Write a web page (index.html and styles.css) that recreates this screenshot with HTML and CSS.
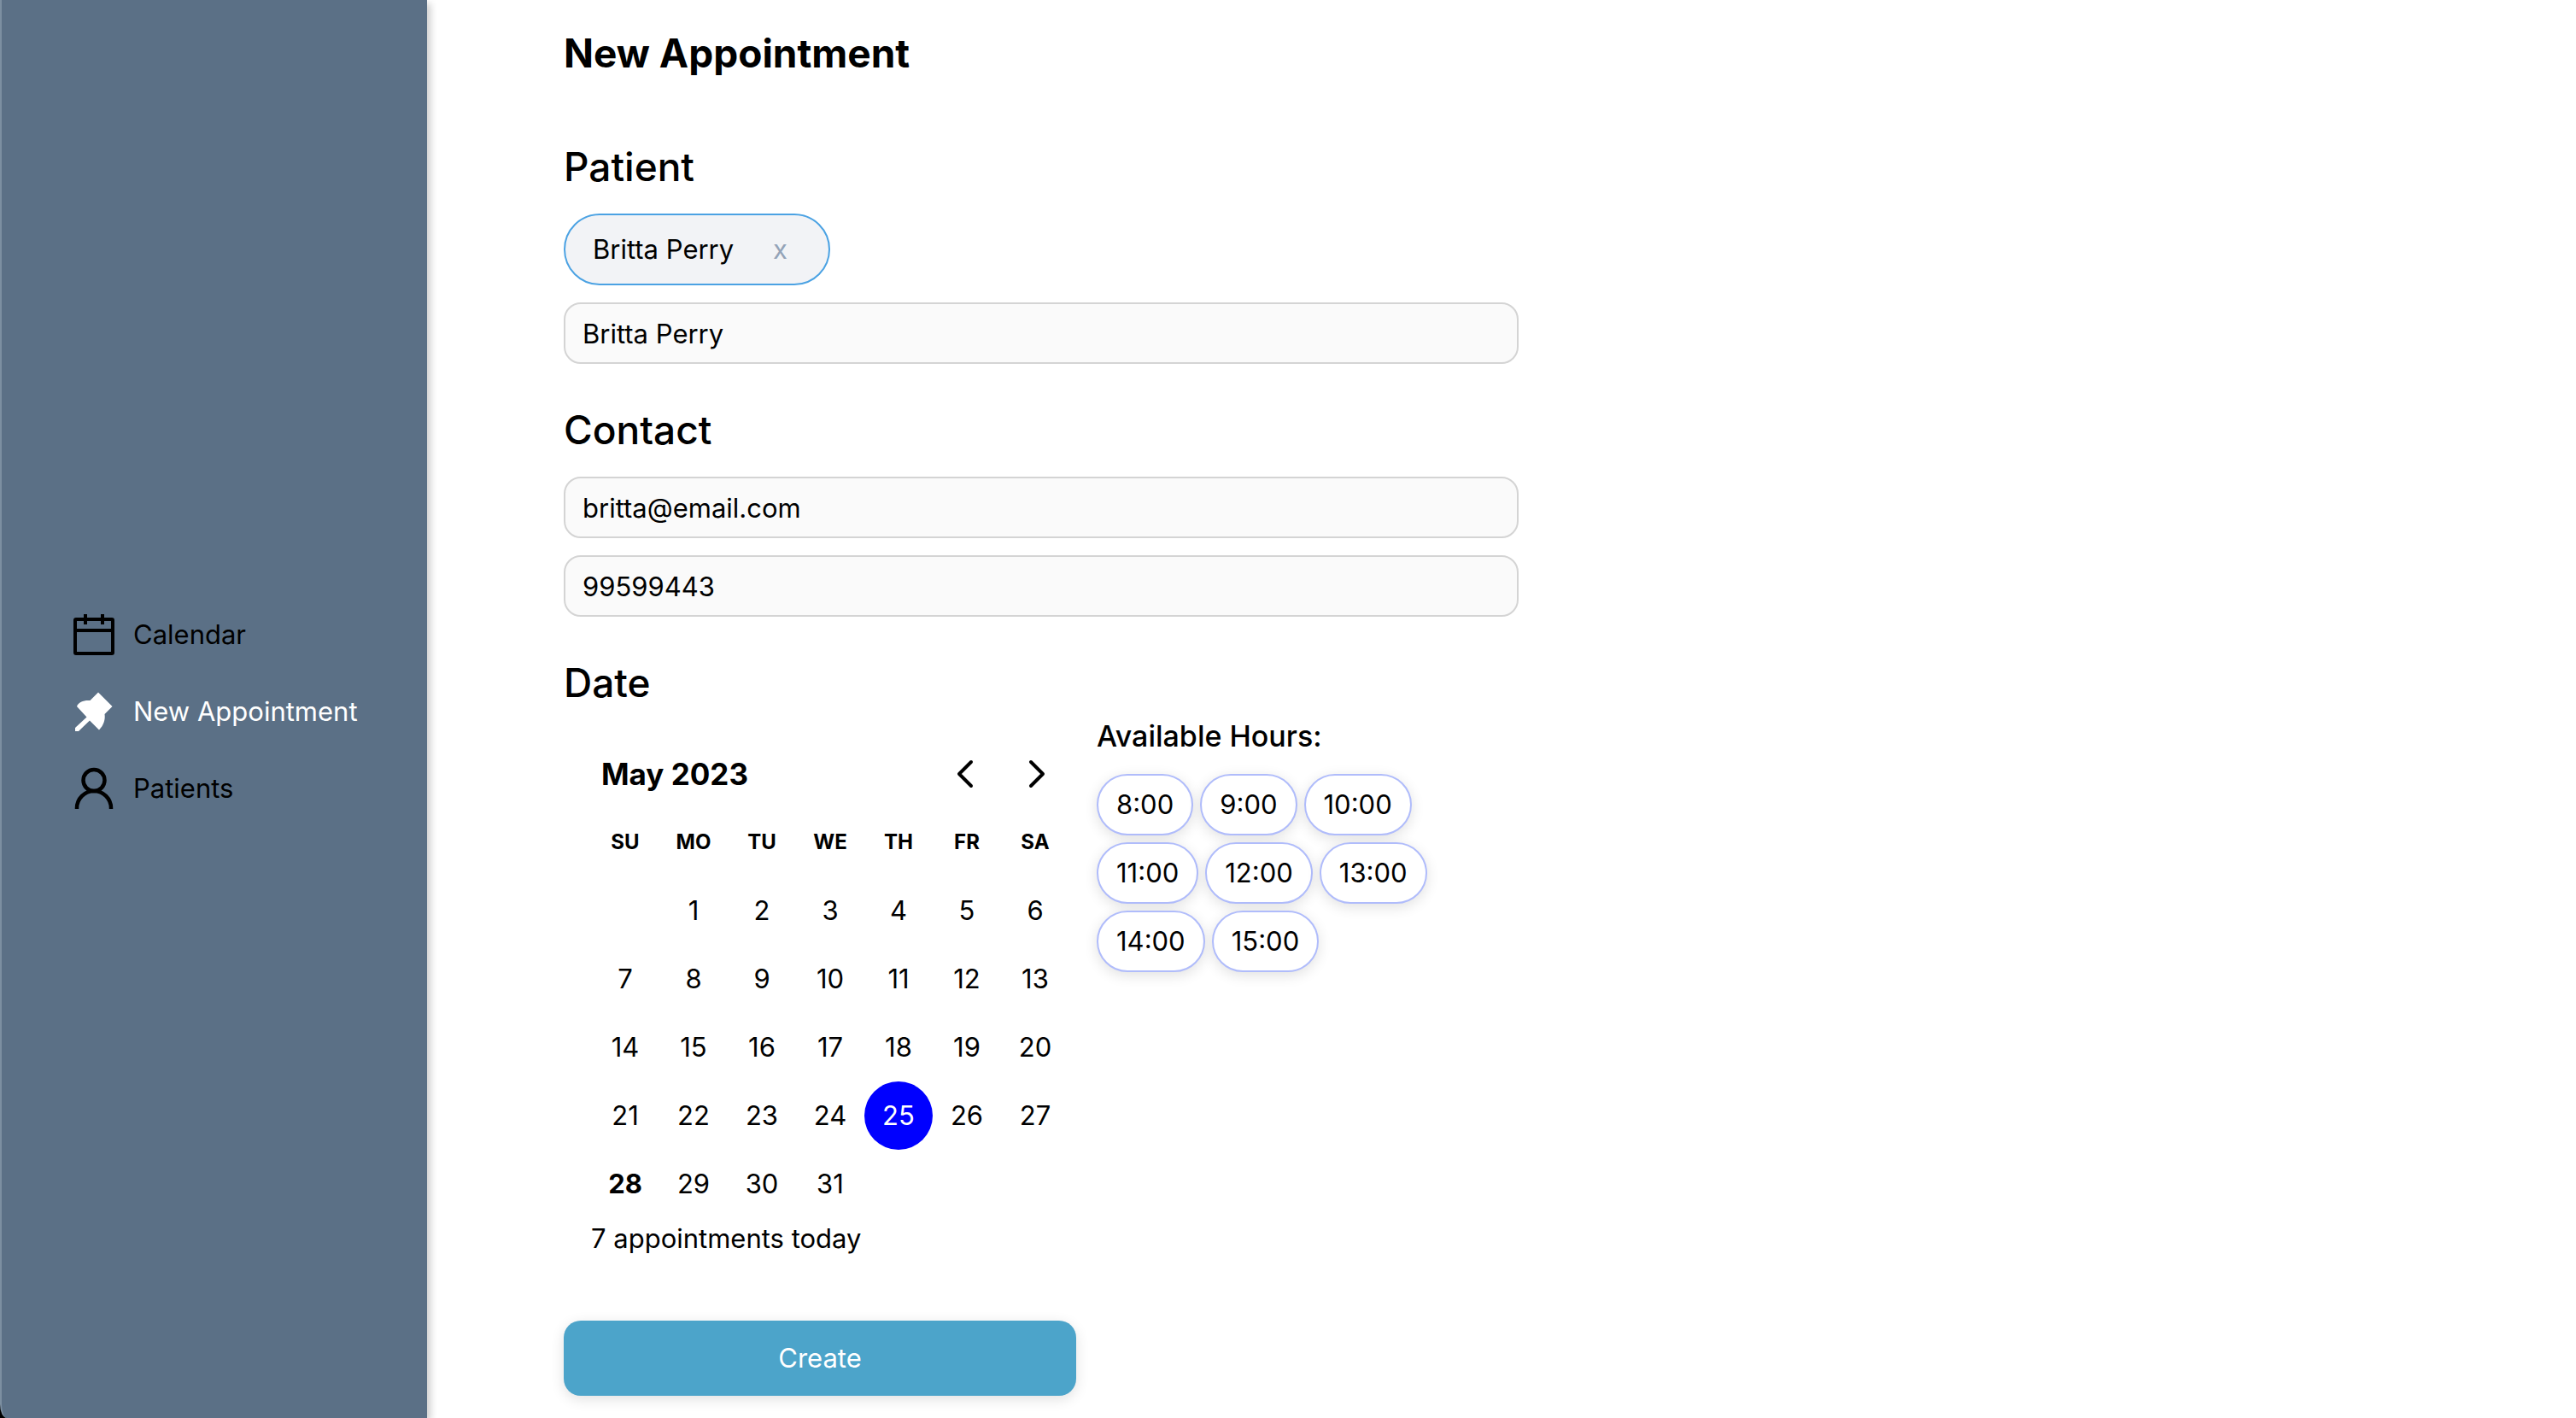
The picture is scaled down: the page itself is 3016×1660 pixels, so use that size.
FILE: index.html
```html
<!DOCTYPE html>
<html lang="en">
<head>
<meta charset="utf-8">
<meta name="viewport" content="width=device-width, initial-scale=1">
<title>New Appointment</title>
<link rel="stylesheet" href="styles.css">
</head>
<body>
<div class="app">
  <nav class="sidebar" aria-label="Main">
    <a class="nav-link" href="#calendar">
      <svg class="nav-icon" viewBox="0 1 52 52" fill="none" stroke="currentColor" stroke-width="4" aria-hidden="true">
        <rect x="4" y="9" width="44" height="40" rx="1"/><path d="M4 22h44M16 3v12M36 3v12"/>
      </svg>
      Calendar
    </a>
    <a class="nav-link nav-link-active" href="#new" aria-current="page">
      <svg class="nav-icon" viewBox="0 1 52 52" fill="currentColor" aria-hidden="true">
        <path d="M31 4.500 L47.500 21 L38.500 30 C39.500 36 37.500 43 32 48.500 L21 37.500 L8 50 L4 50 L4 46 L17.500 33.500 L6 21 C8 15.500 14 13.500 21.500 14 Z"/>
      </svg>
      New Appointment
    </a>
    <a class="nav-link" href="#patients">
      <svg class="nav-icon" viewBox="0 0 52 52" fill="none" stroke="currentColor" stroke-width="4.500" aria-hidden="true">
        <circle cx="26" cy="16.500" r="12.500"/><path d="M6 50v-1a20 20 0 0 1 40 0v1"/>
      </svg>
      Patients
    </a>
  </nav>

  <main class="main">
    <form class="form">
      <h1 class="title">New Appointment</h1>

      <section class="section">
        <h2 class="heading"><label for="patient">Patient</label></h2>
        <div class="chip">Britta Perry <button class="chip-remove" type="button" aria-label="Remove Britta Perry">x</button></div>
        <input class="field" id="patient" type="text" value="Britta Perry">
      </section>

      <section class="section">
        <h2 class="heading">Contact</h2>
        <input class="field" type="email" aria-label="Email" value="britta@email.com">
        <input class="field" type="tel" aria-label="Phone" value="99599443">
      </section>

      <section class="section">
        <h2 class="heading heading-date">Date</h2>
        <div class="schedule">
          <div class="calendar">
            <div class="calendar-head">
              <h3 class="month">May 2023</h3>
              <button class="arrow" type="button" aria-label="Previous month">
                <svg viewBox="0 0 32 36" fill="none" stroke="currentColor" stroke-width="4" stroke-linecap="round" stroke-linejoin="round"><path d="M23 4L9 18l14 14"/></svg>
              </button>
              <button class="arrow" type="button" aria-label="Next month">
                <svg viewBox="0 0 32 36" fill="none" stroke="currentColor" stroke-width="4" stroke-linecap="round" stroke-linejoin="round"><path d="M9 4l14 14L9 32"/></svg>
              </button>
            </div>
            <table class="days">
              <thead>
                <tr><th>SU</th><th>MO</th><th>TU</th><th>WE</th><th>TH</th><th>FR</th><th>SA</th></tr>
              </thead>
              <tbody>
                <tr><td></td><td><button class="day" type="button">1</button></td><td><button class="day" type="button">2</button></td><td><button class="day" type="button">3</button></td><td><button class="day" type="button">4</button></td><td><button class="day" type="button">5</button></td><td><button class="day" type="button">6</button></td></tr>
                <tr><td><button class="day" type="button">7</button></td><td><button class="day" type="button">8</button></td><td><button class="day" type="button">9</button></td><td><button class="day" type="button">10</button></td><td><button class="day" type="button">11</button></td><td><button class="day" type="button">12</button></td><td><button class="day" type="button">13</button></td></tr>
                <tr><td><button class="day" type="button">14</button></td><td><button class="day" type="button">15</button></td><td><button class="day" type="button">16</button></td><td><button class="day" type="button">17</button></td><td><button class="day" type="button">18</button></td><td><button class="day" type="button">19</button></td><td><button class="day" type="button">20</button></td></tr>
                <tr><td><button class="day" type="button">21</button></td><td><button class="day" type="button">22</button></td><td><button class="day" type="button">23</button></td><td><button class="day" type="button">24</button></td><td><button class="day day-selected" type="button" aria-pressed="true">25</button></td><td><button class="day" type="button">26</button></td><td><button class="day" type="button">27</button></td></tr>
                <tr><td><button class="day day-today" type="button">28</button></td><td><button class="day" type="button">29</button></td><td><button class="day" type="button">30</button></td><td><button class="day" type="button">31</button></td><td></td><td></td><td></td></tr>
              </tbody>
            </table>
            <p class="summary">7 appointments today</p>
          </div>
          <div class="hours">
            <h3 class="hours-title">Available Hours:</h3>
            <div class="hours-list">
              <button class="hour" type="button">8:00</button>
              <button class="hour" type="button">9:00</button>
              <button class="hour" type="button">10:00</button>
              <button class="hour" type="button">11:00</button>
              <button class="hour" type="button">12:00</button>
              <button class="hour" type="button">13:00</button>
              <button class="hour" type="button">14:00</button>
              <button class="hour" type="button">15:00</button>
            </div>
          </div>
        </div>
      </section>

      <button class="create" type="submit">Create</button>
    </form>
  </main>
</div>
</body>
</html>
```
FILE: styles.css
```css
* {
  box-sizing: border-box;
}

body {
  margin: 0;
  background: #fff;
  color: #000;
  font-family: Inter, "Liberation Sans", sans-serif;
  font-size: 31px;
  line-height: 48px;
}

h1, h2, h3, p {
  margin: 0;
}

button, input {
  font: inherit;
  color: inherit;
}

button {
  padding: 0;
  border: 0;
  background: none;
  cursor: pointer;
}

.app {
  display: flex;
  min-height: 100vh;
  background: linear-gradient(90deg, #000 20px, #fff 20px);
}

.sidebar {
  z-index: 1;
  flex: 0 0 500px;
  display: flex;
  flex-direction: column;
  justify-content: center;
  gap: 42px;
  padding: 6px 0 0 82px;
  border-left: 2px solid #7c8fa1;
  border-bottom-left-radius: 8px 16px;
  background: #5b7086;
  box-shadow: 4px 4px 8px rgba(0, 0, 0, 0.2);
}

.nav-link {
  display: flex;
  align-items: center;
  gap: 20px;
  color: #000;
  text-decoration: none;
}

.nav-link-active {
  color: #fff;
}

.nav-icon {
  flex: none;
  width: 52px;
  height: 52px;
  margin: -2px 0;
}

.main {
  flex: 1;
  padding: 32px 160px 24px;
  background: #fff;
}

.form {
  display: flex;
  flex-direction: column;
  align-items: flex-start;
  max-width: 1118px;
}

.title {
  margin-bottom: 64px;
  font-size: 46px;
  line-height: 60px;
  font-weight: 700;
}

.section {
  width: 100%;
  margin-bottom: 38px;
}

.heading {
  margin-bottom: 20px;
  padding-top: 4px;
  font-size: 46px;
  line-height: 70px;
  font-weight: 500;
}

.heading-date {
  margin-bottom: 0;
}

.chip {
  display: flex;
  align-items: center;
  justify-content: space-between;
  width: 312px;
  height: 84px;
  margin-bottom: 20px;
  padding: 0 48px 0 32px;
  border: 2px solid #4ba2e3;
  border-radius: 42px;
  background: #f2f3f6;
}

.chip-remove {
  color: #94a3b8;
}

.field {
  display: block;
  width: 100%;
  height: 72px;
  padding: 0 20px;
  border: 2px solid #d4d4d4;
  border-radius: 20px;
  background: #fafafa;
}

.field + .field {
  margin-top: 20px;
}

.schedule {
  display: flex;
  gap: 32px;
}

.calendar {
  width: 592px;
  padding: 32px 0 0 32px;
}

.calendar-head {
  display: flex;
  align-items: center;
  height: 80px;
  margin-left: 12px;
}

.month {
  flex: 1;
  font-size: 35px;
  font-weight: 700;
}

.arrow {
  display: grid;
  place-items: center;
  width: 84px;
  height: 80px;
}

.arrow svg {
  width: 32px;
  height: 36px;
}

.arrow:last-child {
  margin-right: -4px;
}

.days {
  border-collapse: collapse;
  table-layout: fixed;
  width: 560px;
}

.days th, .days td {
  height: 80px;
  padding: 0;
  text-align: center;
}

.days th {
  font-size: 24px;
}

.day {
  display: block;
  width: 80px;
  height: 80px;
  border-radius: 50%;
}

.day-selected {
  background: #00f;
  color: #fff;
}

.day-today {
  font-weight: 700;
}

.hours {
  width: 420px;
  padding-top: 4px;
}

.hours-title {
  margin-bottom: 20px;
  font-size: 34px;
  font-weight: 500;
}

.hours-list {
  display: flex;
  flex-wrap: wrap;
  gap: 8px;
}

.hour {
  height: 72px;
  padding: 0 21px;
  border: 2px solid #b0bcfb;
  border-radius: 36px;
  background: #fff;
  box-shadow: 0 4px 16px rgba(0, 0, 0, 0.12);
}

.create {
  width: 600px;
  height: 88px;
  margin-top: 34px;
  border-radius: 20px;
  background: #4ca4ca;
  color: #fff;
  box-shadow: 0 4px 16px rgba(0, 0, 0, 0.12);
}
```
